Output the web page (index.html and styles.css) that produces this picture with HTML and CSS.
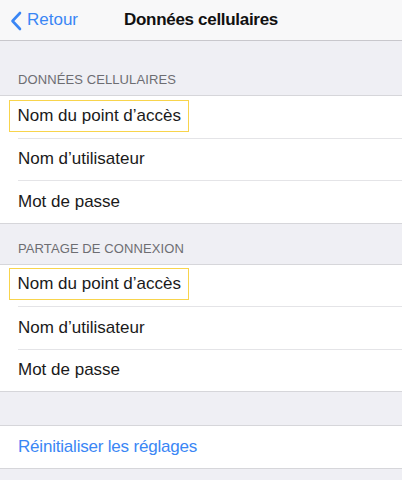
FILE: index.html
```html
<!DOCTYPE html>
<html lang="fr">
<head>
<meta charset="utf-8">
<link rel="stylesheet" href="styles.css">
</head>
<body>
<div class="screen">
  <header class="navbar">
    <div class="back">
      <svg class="chevron" width="12" height="20" viewBox="0 0 12 20"><path d="M10 2 L2.5 10 L10 18" fill="none" stroke="#3a86f5" stroke-width="2.6" stroke-linecap="round" stroke-linejoin="round"/></svg>
      <span>Retour</span>
    </div>
    <div class="title">Données cellulaires</div>
  </header>

  <div class="section-header first">DONNÉES CELLULAIRES</div>
  <div class="group">
    <div class="row"><span class="hl">Nom du point d’accès</span></div>
    <div class="row sep">Nom d’utilisateur</div>
    <div class="row sep">Mot de passe</div>
  </div>

  <div class="section-header">PARTAGE DE CONNEXION</div>
  <div class="group">
    <div class="row"><span class="hl">Nom du point d’accès</span></div>
    <div class="row sep">Nom d’utilisateur</div>
    <div class="row sep">Mot de passe</div>
  </div>

  <div class="spacer"></div>
  <div class="group">
    <div class="row link">Réinitialiser les réglages</div>
  </div>
</div>
</body>
</html>
```

FILE: styles.css
```css
html, body {
  margin: 0;
  padding: 0;
}
body {
  background: #efeff4;
  font-family: "Liberation Sans", Arial, sans-serif;
  -webkit-font-smoothing: antialiased;
}
.screen {
  width: 402px;
  height: 480px;
  overflow: hidden;
  background: #efeff4;
}
.navbar {
  height: 40px;
  background: #f8f8f9;
  border-bottom: 1px solid #c8c7cc;
  display: grid;
  grid-template-columns: 1fr auto 1fr;
  align-items: center;
}
.back {
  display: flex;
  align-items: center;
  gap: 5px;
  padding-left: 10px;
  color: #3a86f5;
  font-size: 17px;
  grid-column: 1;
  grid-row: 1;
}
.chevron {
  display: block;
  margin-top: 1px;
}
.title {
  grid-column: 1 / 4;
  grid-row: 1;
  justify-self: center;
  font-size: 17px;
  font-weight: bold;
  color: #111;
  letter-spacing: -0.3px;
}
.section-header {
  padding: 17px 18px 7px;
  font-size: 13px;
  line-height: 16px;
  color: #6d6d72;
  letter-spacing: 0.1px;
}
.section-header.first {
  padding-top: 31px;
}
.group {
  background: #fff;
  border-top: 0.5px solid #d6d6da;
  border-bottom: 0.5px solid #d6d6da;
}
.row {
  height: 41.5px;
  margin-left: 18px;
  display: flex;
  align-items: center;
  font-size: 17px;
  color: #1a1a1a;
}
.row.sep {
  border-top: 1px solid #e4e4e7;
}
.row.link {
  color: #3a86f5;
  letter-spacing: -0.2px;
}
.hl {
  display: inline-block;
  margin-left: -9px;
  margin-top: -2px;
  padding: 5px 7px 5px 7.5px;
  border: 1.5px solid #f8d44c;
}
.spacer {
  height: 33px;
}
```
